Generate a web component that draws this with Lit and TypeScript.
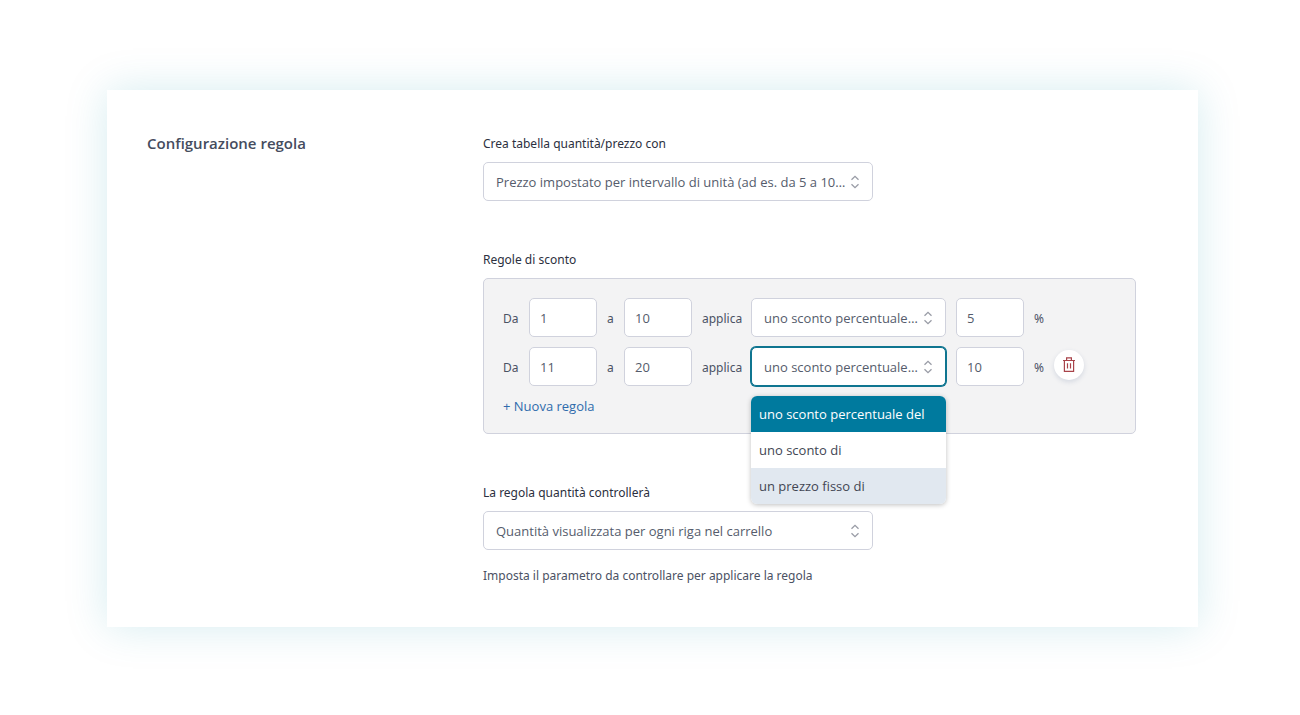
import { LitElement, html, css } from "lit";
import { customElement, state } from "lit/decorators.js";
import { classMap } from "lit/directives/class-map.js";

interface Rule {
  from: number;
  to: number;
  value: number;
  open: boolean;
}

const DISCOUNT_TYPES = ["uno sconto percentuale del", "uno sconto di", "un prezzo fisso di"];

const chevrons = html`<svg class="chevrons" viewBox="0 0 10 14" aria-hidden="true">
  <path d="M1.5 4.8 5 1.3 8.5 4.8M1.5 9.2 5 12.7 8.5 9.2" />
</svg>`;

@customElement("app-root")
export class AppRoot extends LitElement {
  static styles = css`
    :host {
      display: block;
      padding: 90px 102px 88px 107px;
      background: #fff;
      color: #4b5264;
      font-family: "Open Sans", "Noto Sans", sans-serif;
      font-size: 13px;
      line-height: 20px;
    }
    * {
      box-sizing: border-box;
    }
    .card {
      display: grid;
      grid-template-columns: minmax(160px, 336px) minmax(0, 1fr);
      padding: 44px 62px 41px 40px;
      background: #fff;
      box-shadow: 0 0 40px rgba(0, 140, 165, 0.17);
    }
    .title {
      margin: 0;
      font-size: 15px;
      font-weight: 600;
      line-height: 18px;
      color: #454c5e;
    }
    .fields {
      display: flex;
      flex-direction: column;
      gap: 49px;
    }
    .field {
      display: flex;
      flex-direction: column;
      gap: 8px;
      min-width: 0;
    }
    .label,
    .hint,
    .word {
      font-family: "Noto Sans", "Open Sans", sans-serif;
      font-size: 12px;
    }
    .label {
      color: #2c3040;
    }
    .hint {
      margin: 8px 0 0;
    }
    .picker {
      display: grid;
      align-items: center;
      position: relative;
      width: 100%;
      max-width: 390px;
    }
    .picker.small {
      width: 195px;
    }
    .select,
    .chevrons {
      grid-area: 1 / 1;
    }
    .select,
    .number {
      height: 39px;
      margin: 0;
      border: 1px solid #d0d2dd;
      border-radius: 5px;
      background: #fff;
      color: #555c6c;
      font: inherit;
      outline: none;
    }
    .select {
      appearance: none;
      width: 100%;
      padding: 0 24px 0 12px;
      text-overflow: ellipsis;
      white-space: nowrap;
      overflow: hidden;
    }
    .select.open {
      border-color: #0f7590;
      box-shadow: 0 0 0 1px #0f7590;
    }
    .chevrons {
      justify-self: end;
      width: 10px;
      height: 14px;
      margin-right: 13px;
      fill: none;
      stroke: #999ca6;
      stroke-width: 1.3;
      pointer-events: none;
    }
    .rules {
      display: flex;
      flex-direction: column;
      align-items: flex-start;
      gap: 10px;
      padding: 19px 19px 17px;
      border: 1px solid #d0d2dd;
      border-radius: 5px;
      background: #f3f3f4;
    }
    .rule {
      display: flex;
      align-items: center;
      gap: 10px;
    }
    .word {
      padding-top: 2px;
      white-space: nowrap;
    }
    .da {
      width: 16px;
    }
    .a {
      width: 7px;
    }
    .applica {
      width: 39px;
    }
    .percent {
      width: 10px;
    }
    .number {
      width: 68px;
      padding: 0 10px;
    }
    .remove {
      display: grid;
      place-items: center;
      width: 30px;
      height: 30px;
      margin-bottom: 4px;
      padding: 0;
      border: 0;
      border-radius: 50%;
      background: #fff;
      box-shadow: 0 2px 5px rgba(40, 70, 120, 0.15);
      cursor: pointer;
    }
    .trash {
      width: 12px;
      height: 15px;
      fill: none;
      stroke: #a8434a;
      stroke-width: 1.2;
    }
    .add {
      padding: 0;
      border: 0;
      background: none;
      color: #2f6bac;
      font: inherit;
      cursor: pointer;
    }
    .menu {
      position: absolute;
      z-index: 1;
      top: calc(100% + 10px);
      left: 0;
      right: 0;
      margin: 0;
      padding: 0;
      list-style: none;
      border-radius: 6px;
      overflow: hidden;
      background: #fff;
      box-shadow: 0 1px 5px rgba(0, 0, 0, 0.25);
    }
    .option {
      padding: 8px;
      color: #414653;
      white-space: nowrap;
    }
    .option.selected {
      background: #007a9e;
      color: #fff;
    }
    .option.active {
      background: #e1e8f0;
    }
  `;

  @state() private rules: Rule[] = [
    { from: 1, to: 10, value: 5, open: false },
    { from: 11, to: 20, value: 10, open: true },
  ];

  private add() {
    const start = this.rules[this.rules.length - 1].to + 1;
    this.rules = [...this.rules, { from: start, to: start + 9, value: 10, open: false }];
  }

  private remove(index: number) {
    this.rules = this.rules.filter((_, i) => i !== index);
  }

  private renderMenu() {
    return html`<ul class="menu" role="listbox" aria-label="Tipo di sconto">
      ${DISCOUNT_TYPES.map(
        (type, i) => html`<li
          class=${classMap({ option: true, selected: i === 0, active: i === 2 })}
          role="option"
          aria-selected=${i === 0}
        >${type}</li>`
      )}
    </ul>`;
  }

  private renderRule(rule: Rule, i: number) {
    return html`<div class="rule">
      <label class="word da" for="from-${i}">Da</label>
      <input class="number" id="from-${i}" inputmode="numeric" .value=${String(rule.from)} />
      <label class="word a" for="to-${i}">a</label>
      <input class="number" id="to-${i}" inputmode="numeric" .value=${String(rule.to)} />
      <label class="word applica" for="type-${i}">applica</label>
      <div class="picker small">
        <select class=${classMap({ select: true, open: rule.open })} id="type-${i}">
          ${DISCOUNT_TYPES.map((type) => html`<option>${type}</option>`)}
        </select>
        ${chevrons} ${rule.open ? this.renderMenu() : null}
      </div>
      <input
        class="number"
        id="value-${i}"
        inputmode="decimal"
        .value=${String(rule.value)}
      />
      <label class="word percent" for="value-${i}">%</label>
      ${i > 0
        ? html`<button class="remove" type="button" aria-label="Elimina" @click=${() => this.remove(i)}>
            <svg class="trash" viewBox="0 0 12 15" aria-hidden="true">
              <path d="M0 3.5H12M3.6 3.5V.8H8.4V3.5M1.4 3.5V14.3H10.6V3.5M4.5 6.2V11.6M7.5 6.2V11.6" />
            </svg>
          </button>`
        : null}
    </div>`;
  }

  render() {
    return html`<section class="card">
      <h2 class="title">Configurazione regola</h2>
      <div class="fields">
        <div class="field">
          <label class="label" for="mode">Crea tabella quantità/prezzo con</label>
          <div class="picker">
            <select class="select" id="mode">
              <option>Prezzo impostato per intervallo di unità (ad es. da 5 a 10 unità)</option>
            </select>
            ${chevrons}
          </div>
        </div>
        <div class="field" role="group" aria-labelledby="rules-label">
          <span class="label" id="rules-label">Regole di sconto</span>
          <div class="rules">
            ${this.rules.map((rule, i) => this.renderRule(rule, i))}
            <button class="add" type="button" @click=${this.add}>+ Nuova regola</button>
          </div>
        </div>
        <div class="field">
          <label class="label" for="check">La regola quantità controllerà</label>
          <div class="picker">
            <select class="select" id="check">
              <option>Quantità visualizzata per ogni riga nel carrello</option>
            </select>
            ${chevrons}
          </div>
          <p class="hint">Imposta il parametro da controllare per applicare la regola</p>
        </div>
      </div>
    </section>`;
  }
}
